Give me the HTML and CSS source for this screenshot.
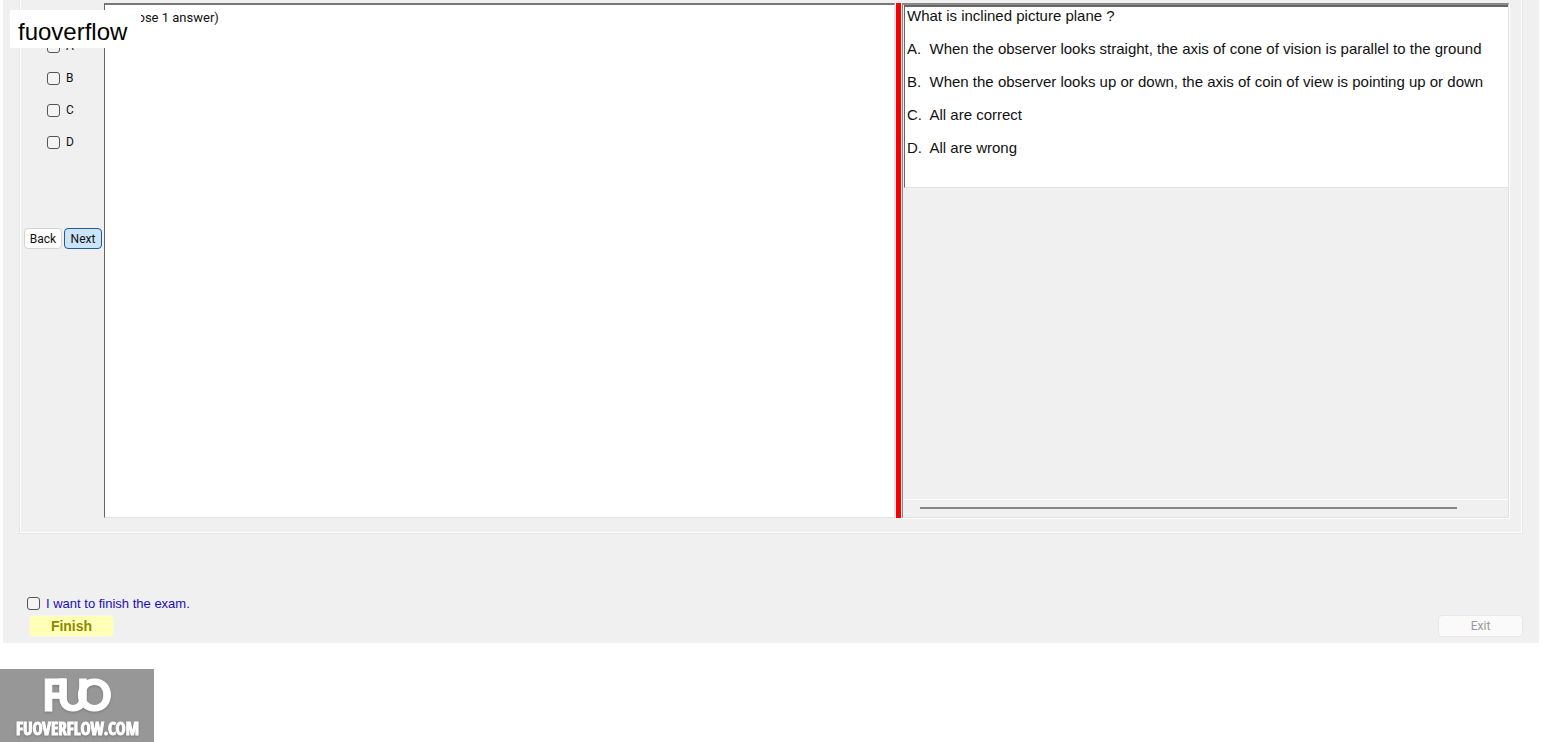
FILE: index.html
```
<!DOCTYPE html>
<html lang="en">
<head>
  <meta charset="UTF-8">
  <meta name="viewport" content="width=device-width, initial-scale=1.0">
  <title>Exam</title>
  <link rel="stylesheet" href="styles.css">
</head>
<body>
  <div class="watermark">fuoverflow</div>

  <main class="exam">
    <section class="group">
      <div class="answers">
        <div class="choices">
          <label><input type="checkbox" name="answer" value="A">A</label>
          <label><input type="checkbox" name="answer" value="B">B</label>
          <label><input type="checkbox" name="answer" value="C">C</label>
          <label><input type="checkbox" name="answer" value="D">D</label>
        </div>
        <div class="nav">
          <button type="button">Back</button>
          <button type="button" class="next">Next</button>
        </div>
      </div>

      <div class="pane hint">(Choose 1 answer)</div>
      <div class="splitter"></div>

      <div class="viewer">
        <div class="question">
          <p>What is inclined picture plane ?</p>
          <p>A.&nbsp; When the observer looks straight, the axis of cone of vision is parallel to the ground</p>
          <p>B.&nbsp; When the observer looks up or down, the axis of coin of view is pointing up or down</p>
          <p>C.&nbsp; All are correct</p>
          <p>D.&nbsp; All are wrong</p>
        </div>
        <div class="scrollbar"><div class="thumb"></div></div>
      </div>
    </section>

    <footer class="bottom">
      <label class="confirm"><input type="checkbox" name="finish">I want to finish the exam.</label>
      <div class="actions">
        <button type="button" class="finish">Finish</button>
        <button type="button" class="exit" disabled>Exit</button>
      </div>
    </footer>
  </main>

  <div class="brand">
    <svg class="logo" width="154" height="73" viewBox="0 0 154 73">
      <text class="mark" x="42 57 77" y="42">FUO</text>
      <text class="site" x="16" y="66">FUOVERFLOW.COM</text>
    </svg>
  </div>
</body>
</html>
```

FILE: styles.css
```
* {
  box-sizing: border-box;
}
body {
  margin: 0;
  background-color: #fff;
  font-family: "Liberation Sans", Arial, sans-serif;
  font-size: 13px;
  color: #111;
}
.watermark {
  position: absolute;
  top: 10px;
  left: 10px;
  z-index: 2;
  width: 131px;
  padding: 8px 8px 2px;
  background-color: #fff;
  font-size: 24px;
  line-height: 28px;
  color: #000;
}
.exam {
  margin: 0 3px;
  padding: 0 16px 6px;
  background-color: #f0f0f0;
}
.group {
  display: grid;
  grid-template-columns: 81px minmax(0, 791fr) 7px minmax(0, 607fr);
  min-height: 534px;
  padding: 3px 13px 15px 3px;
  border: 1px solid #e6e6e6;
  border-top: none;
  box-shadow: inset 1px -1px #fff, inset -1px 0 #fff;
}
.answers {
  font-family: Roboto, sans-serif;
  font-size: 12px;
}
.choices {
  display: flex;
  flex-direction: column;
  gap: 16px;
  padding: 35px 0 0 24px;
}
.choices label {
  display: flex;
  align-items: center;
  gap: 6px;
  height: 16px;
}
input[type="checkbox"] {
  appearance: none;
  width: 13px;
  height: 13px;
  margin: 0;
  border: 1px solid #555;
  border-radius: 3px;
  background-color: #f4f4f4;
}
.nav {
  display: flex;
  gap: 2px;
  margin-top: 78px;
  padding-left: 1px;
}
button {
  height: 21px;
  padding: 0;
  border: 1px solid #d4d4d4;
  border-radius: 4px;
  background-color: #fdfdfd;
  font-family: Roboto, sans-serif;
  font-size: 12px;
  color: #111;
}
.nav button {
  width: 38px;
}
.nav .next {
  border-color: #1f5c93;
  background-color: #cce4f7;
}
.pane {
  border: 1px solid #e2e2e2;
  border-top: 2px solid #777;
  border-left: 1px solid #666;
  background-color: #fff;
}
.hint {
  padding: 5px;
  font-family: Roboto, sans-serif;
  line-height: 16px;
}
.splitter {
  margin: 0 1px;
  background-color: #f80000;
}
.viewer {
  display: flex;
  flex-direction: column;
  border: 1px solid #e2e2e2;
  border-top: 2px solid #888;
  border-left: 1px solid #888;
  box-shadow: 1px 1px #fff;
}
.question {
  min-height: 183px;
  margin-left: 1px;
  padding: 0 2px;
  border-top: 2px solid #666;
  border-left: 1px solid #666;
  border-bottom: 1px solid #e2e2e2;
  background-color: #fff;
  font-size: 15px;
}
.question p {
  margin: 0 0 16px;
  line-height: 17px;
}
.scrollbar {
  margin-top: auto;
  padding: 7px 51px 8px 17px;
  border-top: 1px solid #fff;
}
.thumb {
  height: 2px;
  background-color: #858585;
}
.bottom {
  padding: 60px 0 0 8px;
}
.confirm {
  display: inline-flex;
  align-items: center;
  gap: 6px;
  height: 18px;
  color: #1a0dbb;
}
.actions {
  display: flex;
  justify-content: space-between;
  padding: 2px 0 0 2px;
}
.actions button {
  width: 85px;
  height: 22px;
}
.actions .finish {
  border: 1px solid #f6f6e8;
  background-color: #ffffb8;
  font-family: "Liberation Sans", Arial, sans-serif;
  font-size: 14px;
  font-weight: bold;
  color: #8b8b00;
}
.actions .exit {
  border-color: #e8e8e8;
  background-color: #fafafa;
  color: #999;
}
.brand {
  display: inline-block;
  margin-top: 26px;
  background-color: #979797;
}
.logo {
  display: block;
  fill: #fff;
  filter: drop-shadow(0 1px 1px #777);
}
.mark {
  font-family: Lato, sans-serif;
  font-size: 43px;
  font-weight: 900;
  stroke: #fff;
  stroke-width: 1px;
}
.site {
  font-family: "Liberation Sans Narrow", "Open Sans Condensed", "Liberation Sans", sans-serif;
  font-size: 17px;
  font-weight: bold;
  stroke: #fff;
  stroke-width: 1px;
}
```
